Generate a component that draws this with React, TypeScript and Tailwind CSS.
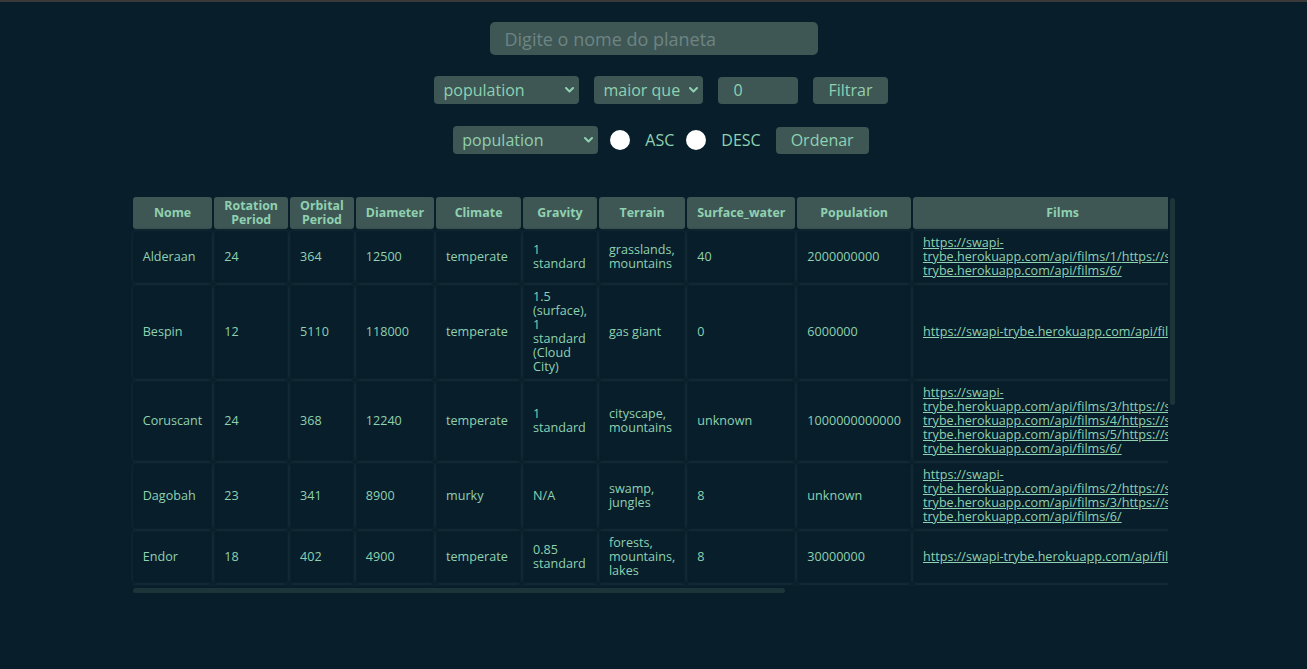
import React, { useState } from 'react';

type Planet = {
  name: string;
  rotation_period: string;
  orbital_period: string;
  diameter: string;
  climate: string;
  gravity: string;
  terrain: string;
  surface_water: string;
  population: string;
  films: string[];
  created: string;
  edited: string;
  url: string;
};

const film = (n: number) => `https://swapi-trybe.herokuapp.com/api/films/${n}/`;
const planetUrl = (n: number) => `https://swapi-trybe.herokuapp.com/api/planets/${n}/`;

const planets: Planet[] = [
  { name: 'Alderaan', rotation_period: '24', orbital_period: '364', diameter: '12500', climate: 'temperate', gravity: '1 standard', terrain: 'grasslands, mountains', surface_water: '40', population: '2000000000', films: [film(1), film(6)], created: '2014-12-10T11:35:48.479000Z', edited: '2014-12-20T20:58:18.420000Z', url: planetUrl(2) },
  { name: 'Bespin', rotation_period: '12', orbital_period: '5110', diameter: '118000', climate: 'temperate', gravity: '1.5 (surface), 1 standard (Cloud City)', terrain: 'gas giant', surface_water: '0', population: '6000000', films: [film(5)], created: '2014-12-10T11:43:55.240000Z', edited: '2014-12-20T20:58:18.427000Z', url: planetUrl(6) },
  { name: 'Coruscant', rotation_period: '24', orbital_period: '368', diameter: '12240', climate: 'temperate', gravity: '1 standard', terrain: 'cityscape, mountains', surface_water: 'unknown', population: '1000000000000', films: [film(3), film(4), film(5), film(6)], created: '2014-12-10T11:54:13.921000Z', edited: '2014-12-20T20:58:18.432000Z', url: planetUrl(9) },
  { name: 'Dagobah', rotation_period: '23', orbital_period: '341', diameter: '8900', climate: 'murky', gravity: 'N/A', terrain: 'swamp, jungles', surface_water: '8', population: 'unknown', films: [film(2), film(3), film(6)], created: '2014-12-10T11:42:22.590000Z', edited: '2014-12-20T20:58:18.425000Z', url: planetUrl(5) },
  { name: 'Endor', rotation_period: '18', orbital_period: '402', diameter: '4900', climate: 'temperate', gravity: '0.85 standard', terrain: 'forests, mountains, lakes', surface_water: '8', population: '30000000', films: [film(3)], created: '2014-12-10T11:50:29.349000Z', edited: '2014-12-20T20:58:18.429000Z', url: planetUrl(7) },
  { name: 'Hoth', rotation_period: '23', orbital_period: '549', diameter: '7200', climate: 'frozen', gravity: '1.1 standard', terrain: 'tundra, ice caves, mountain ranges', surface_water: '100', population: 'unknown', films: [film(2)], created: '2014-12-10T11:39:13.934000Z', edited: '2014-12-20T20:58:18.423000Z', url: planetUrl(4) },
  { name: 'Kamino', rotation_period: '27', orbital_period: '463', diameter: '19720', climate: 'temperate', gravity: '1 standard', terrain: 'ocean', surface_water: '100', population: '1000000000', films: [film(5)], created: '2014-12-10T12:45:06.577000Z', edited: '2014-12-20T20:58:18.434000Z', url: planetUrl(10) },
  { name: 'Naboo', rotation_period: '26', orbital_period: '312', diameter: '12120', climate: 'temperate', gravity: '1 standard', terrain: 'grassy hills, swamps, forests, mountains', surface_water: '12', population: '4500000000', films: [film(3), film(4), film(5), film(6)], created: '2014-12-10T11:52:31.066000Z', edited: '2014-12-20T20:58:18.430000Z', url: planetUrl(8) },
  { name: 'Tatooine', rotation_period: '23', orbital_period: '304', diameter: '10465', climate: 'arid', gravity: '1 standard', terrain: 'desert', surface_water: '1', population: '200000', films: [film(1), film(3), film(4), film(5), film(6)], created: '2014-12-09T13:50:49.641000Z', edited: '2014-12-20T20:58:18.411000Z', url: planetUrl(1) },
  { name: 'Yavin IV', rotation_period: '24', orbital_period: '4818', diameter: '10200', climate: 'temperate, tropical', gravity: '1 standard', terrain: 'jungle, rainforests', surface_water: '8', population: '1000', films: [film(1)], created: '2014-12-10T11:37:19.144000Z', edited: '2014-12-20T20:58:18.421000Z', url: planetUrl(3) },
];

const headers = [
  'Nome',
  'Rotation Period',
  'Orbital Period',
  'Diameter',
  'Climate',
  'Gravity',
  'Terrain',
  'Surface_water',
  'Population',
  'Films',
  'Created',
  'Edited',
  'URL',
];

const columns = ['population', 'orbital_period', 'diameter', 'rotation_period', 'surface_water'];

const cell = 'rounded-[4px] px-[10px] py-[5px] align-middle shadow-[0_0_4px_#1b353b]';

function Chevron() {
  return (
    <svg
      className="pointer-events-none absolute right-[5px] top-1/2 -translate-y-1/2"
      width="9"
      height="6"
      viewBox="0 0 9 6"
      fill="none"
    >
      <path d="M1 1l3.5 3.5L8 1" stroke="#8fd1b0" strokeWidth="2" strokeLinecap="round" strokeLinejoin="round" />
    </svg>
  );
}

function Select({ options, width }: { options: string[]; width: string }) {
  return (
    <div className={`relative ${width}`}>
      <select className="h-7 w-full appearance-none rounded-[4px] bg-[#3e5755] pl-[9px] pr-5 text-[16px] text-[#8fd1b0] outline-none">
        {options.map((o) => (
          <option key={o}>{o}</option>
        ))}
      </select>
      <Chevron />
    </div>
  );
}

function App() {
  const [name, setName] = useState('');
  const [value, setValue] = useState('0');

  return (
    <div
      className="min-h-screen border-t-2 border-[#3b3a3a] bg-[#081e2b] pt-5 text-[#8fd1b0]"
      style={{ fontFamily: '"Open Sans", "DejaVu Sans", sans-serif' }}
    >
      <div className="flex flex-col items-center">
        <input
          type="text"
          value={name}
          onChange={(e) => setName(e.target.value)}
          placeholder="Digite o nome do planeta"
          className="h-[33px] w-[328px] rounded-[5px] bg-[#3e5755] px-[15px] text-[18px] text-[#8fd1b0] outline-none placeholder:text-[#6e8482]"
        />

        <div className="mt-[21px] flex items-center">
          <div className="ml-[15px]">
            <Select options={columns} width="w-[145px]" />
          </div>
          <div className="ml-[15px]">
            <Select options={['maior que', 'menor que', 'igual a']} width="w-[109px]" />
          </div>
          <input
            type="number"
            value={value}
            onChange={(e) => setValue(e.target.value)}
            className="ml-[15px] h-[27px] w-[80px] rounded-[4px] bg-[#3e5755] px-[15px] text-[16px] text-[#8fd1b0] outline-none [appearance:textfield] [&::-webkit-inner-spin-button]:appearance-none"
          />
          <button className="ml-[15px] h-[27px] rounded-[4px] bg-[#3e5755] px-[15px] text-[16px] text-[#8fd1b0]">
            Filtrar
          </button>
        </div>

        <div className="mt-[22px] flex items-center">
          <div className="ml-[15px]">
            <Select options={columns} width="w-[145px]" />
          </div>
          <label className="ml-3 flex items-center text-[16px]">
            <input type="radio" name="sort" className="h-5 w-5 appearance-none rounded-full bg-white" />
            <span className="ml-[15px]">ASC</span>
          </label>
          <label className="ml-3 flex items-center text-[16px]">
            <input type="radio" name="sort" className="h-5 w-5 appearance-none rounded-full bg-white" />
            <span className="ml-[15px]">DESC</span>
          </label>
          <button className="ml-[15px] h-[27px] rounded-[4px] bg-[#3e5755] px-[15px] text-[16px] text-[#8fd1b0]">
            Ordenar
          </button>
        </div>
      </div>

      {/* tabela com barras de rolagem desenhadas */}
      <div className="mx-auto mt-[41px] w-4/5">
        <div className="flex h-[391px]">
          <div className="min-w-0 flex-1 overflow-hidden">
            <table className="border-separate border-spacing-[2px] text-[12.6px] leading-[14px]">
              <thead>
                <tr>
                  {headers.map((h) => (
                    <th key={h} className="rounded-[3px] bg-[#3e5755] px-[10px] py-[2px] text-center text-[12.4px] font-bold">
                      {h}
                    </th>
                  ))}
                </tr>
              </thead>
              <tbody>
                {planets.map((p) => (
                  <tr key={p.name}>
                    <td className={cell}>{p.name}</td>
                    <td className={cell}>{p.rotation_period}</td>
                    <td className={cell}>{p.orbital_period}</td>
                    <td className={cell}>{p.diameter}</td>
                    <td className={cell}>{p.climate}</td>
                    <td className={cell}>{p.gravity}</td>
                    <td className={cell}>{p.terrain}</td>
                    <td className={cell}>{p.surface_water}</td>
                    <td className={cell}>{p.population}</td>
                    <td className={cell}>
                      {p.films.map((f, i) => (
                        <a key={i} href={f} className="underline">
                          {f}
                        </a>
                      ))}
                    </td>
                    <td className={cell}>{p.created}</td>
                    <td className={cell}>{p.edited}</td>
                    <td className={cell}>
                      <a href={p.url} className="underline">
                        {p.url}
                      </a>
                    </td>
                  </tr>
                ))}
              </tbody>
            </table>
          </div>
          <div className="flex w-2 justify-center pt-[3px]">
            <div className="h-[207px] w-[5px] rounded-full bg-[#1c3538]" />
          </div>
        </div>
        <div className="flex h-2 items-center pl-[2px] pr-2">
          <div className="h-[5px] w-[63%] rounded-full bg-[#1c3538]" />
        </div>
      </div>
    </div>
  );
}

export default App;
